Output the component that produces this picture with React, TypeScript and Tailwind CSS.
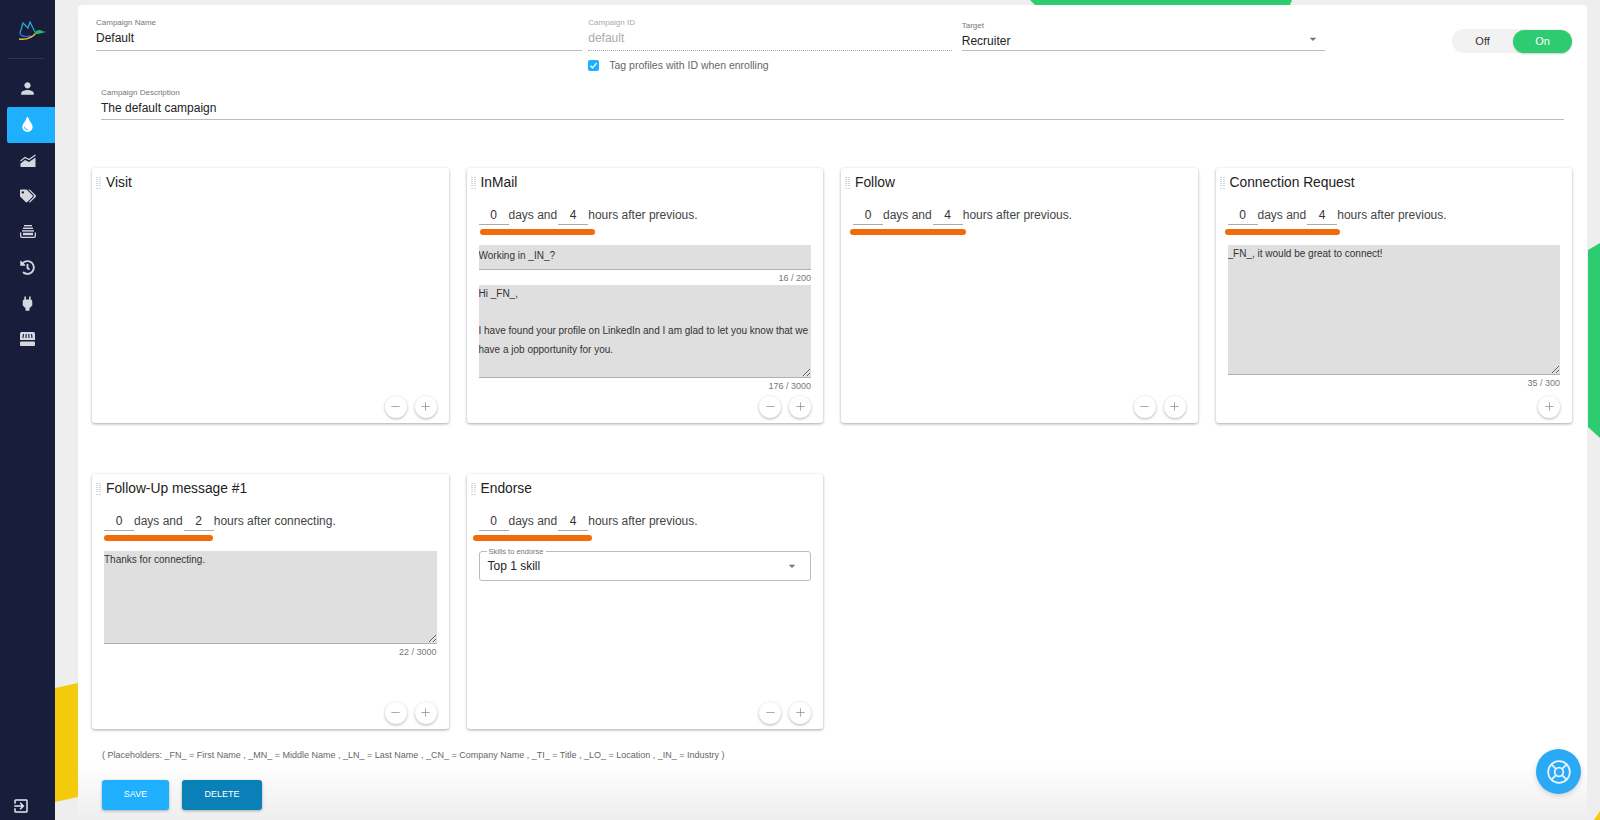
import { FaHistory, FaTags, FaTint } from 'react-icons/fa';
import { MdArrowDropDown, MdExitToApp, MdPerson, MdPower } from 'react-icons/md';
import { LifeBuoy, Minus, Plus } from 'lucide-react';

const ChartIcon = () => (
  <svg width="16" height="13" viewBox="0 0 16 13" fill="currentColor">
    <path d="M0.5 13 V9.5 L5 6 L9 8 L15.5 3.5 V13 Z" />
    <path d="M0.5 7 L5 3.5 L9 5.5 L15.5 1" fill="none" stroke="currentColor" strokeWidth="1.1" />
  </svg>
);

const QueueIcon = () => (
  <svg width="16" height="13" viewBox="0 0 16 13" fill="currentColor">
    <rect x="4" y="0" width="8" height="1.4" />
    <rect x="3" y="2.6" width="10" height="1.4" />
    <rect x="2" y="5.2" width="12" height="1.4" />
    <path d="M0.7 7.5 V11.2 Q0.7 12.3 1.8 12.3 H14.2 Q15.3 12.3 15.3 11.2 V7.5" fill="none" stroke="currentColor" strokeWidth="1.3" />
    <rect x="3" y="7.8" width="10" height="2.4" />
  </svg>
);

const StoreIcon = () => (
  <svg width="15" height="14" viewBox="0 0 15 14" fill="currentColor">
    <path d="M1.5 0 H13.5 Q15 0 15 1.5 V8 H0 V1.5 Q0 0 1.5 0 Z" />
    <path d="M3.5 2 L3 6 M6.2 2 L6 6 M8.8 2 L9 6 M11.5 2 L12 6" stroke="#181d3c" strokeWidth="1.1" />
    <rect x="0" y="9.5" width="15" height="4.5" rx="1" />
  </svg>
);

const navIcons = [
  { key: 'user', icon: <MdPerson size={19} /> },
  { key: 'drip', icon: <FaTint size={15} />, active: true },
  { key: 'stats', icon: <ChartIcon /> },
  { key: 'tags', icon: <FaTags size={16} /> },
  { key: 'queue', icon: <QueueIcon /> },
  { key: 'history', icon: <FaHistory size={15} /> },
  { key: 'plug', icon: <MdPower size={19} /> },
  { key: 'store', icon: <StoreIcon /> },
];

const Logo = () => (
  <svg width="28" height="20" viewBox="0 0 28 20" fill="none">
    <path d="M2 12 L5 2 L10 7 L12 1 L17 11" stroke="#27a7c9" strokeWidth="1.3" />
    <path d="M2 12 C3 16 8 16 13 15" stroke="#2f6bd0" strokeWidth="1.3" />
    <path d="M1 18 C8 19 14 17 18 12" stroke="#f2b933" strokeWidth="1.3" />
    <path d="M16 13 C17 9 22 8 24 10 L28 11 L20 13 Z" fill="#2fb56b" />
  </svg>
);

const Grip = () => (
  <span className="grid h-[12px] w-[5px] shrink-0 grid-cols-2 gap-[1px]">
    {Array.from({ length: 12 }).map((_, i) => (
      <span key={i} className="h-[1px] w-[2px] bg-gray-300" />
    ))}
  </span>
);

const Delay = ({ hours, suffix }: { hours: string; suffix: string }) => (
  <div className="flex h-[20px] items-center text-[12px] leading-[20px] text-[#444]">
    <span className="h-[20px] w-[30px] border-b border-[#aaa] text-center text-[#333]">0</span>
    <span>days and</span>
    <span className="ml-[1px] h-[20px] w-[30px] border-b border-[#aaa] text-center text-[#333]">{hours}</span>
    <span>{suffix}</span>
  </div>
);

const Counter = ({ children }: { children: string }) => (
  <div className="mt-[3px] text-right text-[9px] leading-[11px] text-[#777]">{children}</div>
);

const Message = ({ value, h, children }: { value: string; h: string; children: string }) => (
  <div>
    <textarea
      readOnly
      value={value}
      className={`${h} block w-full border-b border-[#b0b0b0] bg-[#dfdfdf] text-[10px] leading-[18.7px] text-[#333] outline-none`}
    />
    <Counter>{children}</Counter>
  </div>
);

const RoundBtn = ({ children }: { children: React.ReactNode }) => (
  <button className="flex h-[22px] w-[22px] items-center justify-center rounded-full bg-white text-[#888] shadow-[0_1px_3px_rgba(0,0,0,0.3)]">
    {children}
  </button>
);

const Card = ({
  title,
  children,
  noMinus,
}: {
  title: string;
  children?: React.ReactNode;
  noMinus?: boolean;
}) => (
  <div className="relative flex h-[255px] flex-col rounded-[3px] bg-white pl-[3px] pr-[12px] pt-[8px] shadow-[0_1px_3px_rgba(0,0,0,0.35)]">
    <div className="flex items-center gap-[5px] pl-[1px]">
      <Grip />
      <span className="text-[13.8px] leading-[14px] text-[#222]">{title}</span>
    </div>
    <div className="flex-1 pl-[9px] pt-[15px]">{children}</div>
    <div className="flex justify-end gap-[8px] pb-[5px]">
      {!noMinus && (
        <RoundBtn>
          <Minus size={13} strokeWidth={1.3} />
        </RoundBtn>
      )}
      <RoundBtn>
        <Plus size={13} strokeWidth={1.3} />
      </RoundBtn>
    </div>
  </div>
);

export default function App() {
  return (
    <div className="relative flex h-[820px] w-[1600px] overflow-hidden bg-[#eeeeee] font-['Liberation_Sans',Arial,sans-serif]">
      <aside className="relative z-10 flex w-[55px] shrink-0 flex-col bg-[#181d3c] pt-[21px]">
        <div className="flex h-[24px] justify-center pl-[8px]">
          <Logo />
        </div>
        <div className="mx-[8px] mt-[13px] h-px w-[36px] bg-[#2f3454]" />
        <nav className="mt-[12px] flex flex-col">
          {navIcons.map((item) => (
            <div
              key={item.key}
              className={
                item.active
                  ? 'ml-[7px] flex h-[36px] items-center justify-center rounded-l-[2px] bg-[#1eb0ff] pr-[7px] text-white'
                  : 'flex h-[35.7px] items-center justify-center text-[#d5d7df]'
              }
            >
              {item.icon}
            </div>
          ))}
        </nav>
        <div className="mt-auto flex pb-[5px] pl-[12px] text-[#e4e6ee]">
          <MdExitToApp size={18} />
        </div>
      </aside>

      {/* background shapes behind the form */}
      <svg className="absolute left-[55px] top-[683px]" width="23" height="120" viewBox="0 0 23 120">
        <polygon points="0,5 23,0 23,114 0,119" fill="#f4ca0c" />
      </svg>
      <svg className="absolute left-[1030px] top-0" width="262" height="6" viewBox="0 0 262 6">
        <polygon points="0,0 262,0 260,5 5,5" fill="#2ecc71" />
      </svg>
      <svg className="absolute right-0 top-[243px]" width="12" height="195" viewBox="0 0 12 195">
        <polygon points="0,7 12,0 12,195 0,184" fill="#2ecc71" />
      </svg>
      <svg className="absolute bottom-0 right-0" width="6" height="9" viewBox="0 0 6 9">
        <polygon points="0,9 6,0 6,9" fill="#f4ca0c" />
      </svg>

      <main className="relative z-0 ml-[23px] mt-[5px] flex h-[815px] w-[1509px] flex-col rounded-t-[4px] bg-gradient-to-b from-white from-[93%] to-[#eeeeee] pl-[14px] pr-[15px]">
        <div className="flex items-start">
          <div className="ml-[4px] mt-[12px] w-[487px] border-b border-[#bbb] pb-[3px]">
            <div className="text-[8px] leading-[11px] text-[#777]">Campaign Name</div>
            <div className="mt-[2px] text-[12px] leading-[17px] text-[#222]">Default</div>
          </div>
          <div className="ml-[6px] mt-[12px] w-[364px]">
            <div className="border-b border-dotted border-[#aaa] pb-[3px]">
              <div className="text-[8px] leading-[11px] text-[#aaa]">Campaign ID</div>
              <div className="mt-[2px] text-[12px] leading-[17px] text-[#aaa]">default</div>
            </div>
            <label className="mt-[7px] flex items-center gap-[10px] text-[10.5px] text-[#666]">
              <span className="flex h-[11px] w-[11px] items-center justify-center rounded-[2px] bg-[#1eb0ff]">
                <svg width="9" height="9" viewBox="0 0 10 10" fill="none">
                  <path d="M1.5 5.2 L4 7.6 L8.5 2.4" stroke="white" strokeWidth="1.5" />
                </svg>
              </span>
              Tag profiles with ID when enrolling
            </label>
          </div>
          <div className="relative ml-[10px] mt-[15px] h-[31px] w-[364px] border-b border-[#bbb]">
            <div className="text-[8px] leading-[11px] text-[#777]">Target</div>
            <div className="mt-[3px] text-[12px] leading-[15px] text-[#222]">Recruiter</div>
            <MdArrowDropDown size={16} className="absolute right-[4px] top-[11px] text-[#777]" />
          </div>
          <div className="ml-[127px] mt-[24px] flex h-[24px] w-[120px] items-center rounded-full bg-[#f2f2f2] text-[11px]">
            <span className="flex-1 text-center text-[#333]">Off</span>
            <span className="flex h-[23px] w-[59px] items-center justify-center rounded-full bg-[#2ecc71] text-white shadow-[0_1px_2px_rgba(0,0,0,0.2)]">
              On
            </span>
          </div>
        </div>

        <div className="ml-[9px] mr-[8px] mt-[13px] border-b border-[#bbb] pb-[2px]">
          <div className="text-[8px] leading-[11px] text-[#777]">Campaign Description</div>
          <div className="mt-[2px] text-[12px] leading-[17px] text-[#222]">The default campaign</div>
        </div>

        <div className="mt-[48px] grid grid-cols-4 gap-x-[18px] gap-y-[51px]">
          <Card title="Visit" />
          <Card title="InMail">
            <Delay hours="4" suffix="hours after previous." />
            <div className="ml-[1px] mt-[4px] h-[6px] w-[115px] rounded-full bg-[#f26b0a]" />
            <div className="mt-[10px]">
              <Message value="Working in _IN_?" h="h-[25px] resize-none pt-[2px]">16 / 200</Message>
              <div className="mt-[1px]">
                <Message
                  value={'Hi _FN_,\n\nI have found your profile on LinkedIn and I am glad to let you know that we have a job opportunity for you.'}
                  h="h-[93px] resize-y"
                >
                  176 / 3000
                </Message>
              </div>
            </div>
          </Card>
          <Card title="Follow">
            <Delay hours="4" suffix="hours after previous." />
            <div className="ml-[-3px] mt-[4px] h-[6px] w-[116px] rounded-full bg-[#f26b0a]" />
          </Card>
          <Card title="Connection Request" noMinus>
            <Delay hours="4" suffix="hours after previous." />
            <div className="ml-[-3px] mt-[4px] h-[6px] w-[115px] rounded-full bg-[#f26b0a]" />
            <div className="mt-[10px]">
              <Message value="_FN_, it would be great to connect!" h="h-[130px] resize-y">35 / 300</Message>
            </div>
          </Card>
          <Card title="Follow-Up message #1">
            <Delay hours="2" suffix="hours after connecting." />
            <div className="ml-[0px] mt-[4px] h-[6px] w-[109px] rounded-full bg-[#f26b0a]" />
            <div className="mt-[10px]">
              <Message value="Thanks for connecting." h="h-[93px] resize-y">22 / 3000</Message>
            </div>
          </Card>
          <Card title="Endorse">
            <Delay hours="4" suffix="hours after previous." />
            <div className="ml-[-6px] mt-[4px] h-[6px] w-[119px] rounded-full bg-[#f26b0a]" />
            <div className="relative mt-[10px] flex h-[30px] items-center rounded-[3px] border border-[#bbb] pl-[8px] text-[12px] text-[#222]">
              Top 1 skill
              <span className="absolute left-[7px] top-[-5px] bg-white px-[2px] text-[7.5px] leading-[9px] text-[#777]">
                Skills to endorse
              </span>
              <MdArrowDropDown size={16} className="absolute right-[10px] top-[6px] text-[#777]" />
            </div>
          </Card>
        </div>

        <div className="ml-[10px] mt-[21px] text-[9px] leading-[11px] text-[#666]">
          ( Placeholders: _FN_ = First Name , _MN_ = Middle Name , _LN_ = Last Name , _CN_ = Company Name , _TI_ = Title , _LO_ = Location , _IN_ = Industry )
        </div>
        <div className="ml-[10px] mt-[19px] flex gap-[13px]">
          <button className="h-[30px] w-[67px] rounded-[3px] bg-[#1eb0ff] text-[9px] text-white shadow-[0_1px_3px_rgba(0,0,0,0.3)]">SAVE</button>
          <button className="h-[30px] w-[80px] rounded-[3px] bg-[#0a80b8] text-[9px] text-white shadow-[0_1px_3px_rgba(0,0,0,0.3)]">DELETE</button>
        </div>
      </main>

      <button className="absolute bottom-[26px] left-[1536px] flex h-[45px] w-[45px] items-center justify-center rounded-full bg-[#2aa9f5] text-[#e8f5ff] shadow-[0_2px_5px_rgba(0,0,0,0.15)]">
        <LifeBuoy size={26} strokeWidth={1.6} />
      </button>
    </div>
  );
}
